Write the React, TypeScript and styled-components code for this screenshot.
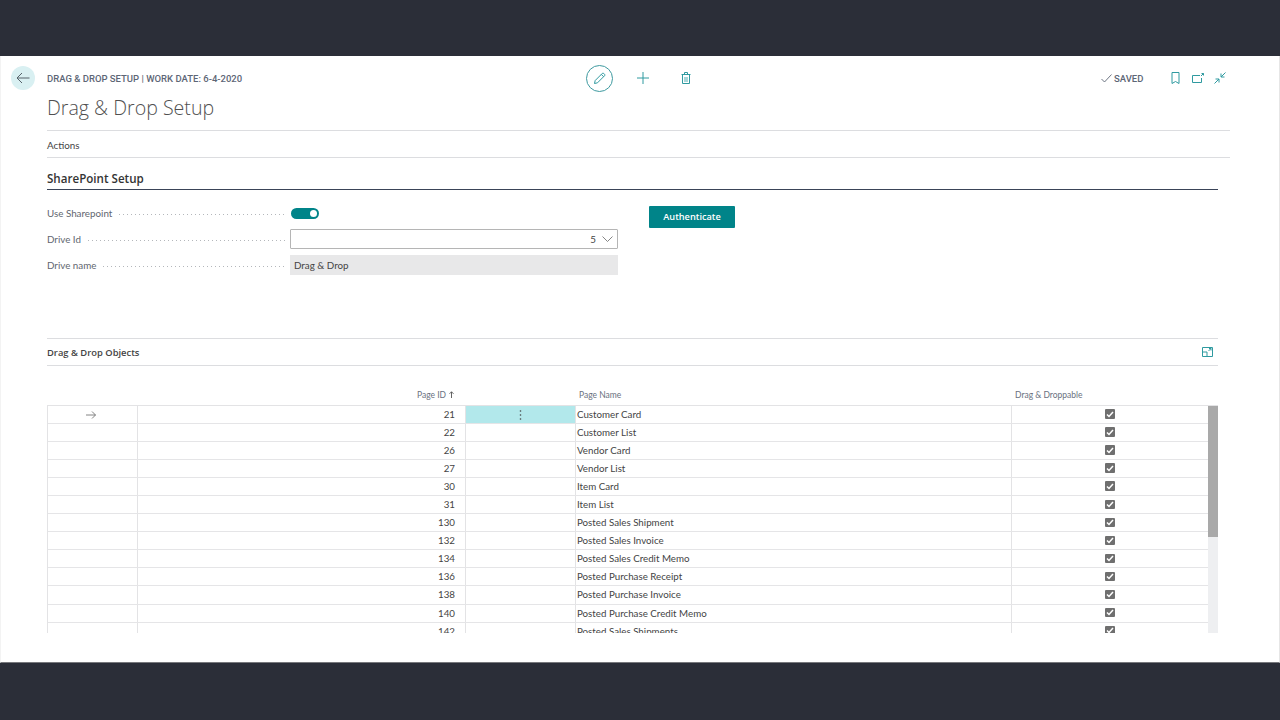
import React from "react";
import styled, { createGlobalStyle } from "styled-components";

const Global = createGlobalStyle`
  html, body { margin: 0; padding: 0; background: #2b2e38; }
  * { box-sizing: border-box; }
`;

const Frame = styled.div`
  width: 1280px; height: 720px; display: flex; flex-direction: column; overflow: hidden;
  font-family: "Open Sans", "Liberation Sans", sans-serif; color: #3f3f3f; background: #2b2e38;
`;
const DarkBar = styled.div`height: 56px; flex: none; background: #2b2e38;`;
const Sheet = styled.main`
  height: 607px; flex: none; background: #fff; border-bottom: 1px solid #77787c; border-right: 1px solid #e6e6e6; border-left: 1px solid #f3f3f3;
  padding: 0 61px 0 46px; display: flex; flex-direction: column;
`;
const Header = styled.header`display: flex; align-items: center; height: 44px; position: relative;`;
const BackCircle = styled.button`
  position: absolute; left: -36px; top: 10px; width: 24px; height: 24px; border-radius: 50%; border: 0; padding: 0;
  background: #d9f0f2; display: flex; align-items: center; justify-content: center;
`;
const Crumb = styled.div`
  font-family: Roboto, "Liberation Sans", sans-serif; font-size: 9.5px; font-weight: 500; color: #5d6676; width: 520px; flex: none;
`;
const CenterTools = styled.div`display: flex; align-items: center; width: 532px; padding-left: 19px; flex: none;`;
const EditCircle = styled.div`
  width: 27px; height: 27px; border-radius: 50%; border: 1px solid #3e9aa0; display: flex; align-items: center; justify-content: center; margin-right: 23px;
`;
const ToolSlot = styled.div`width: 14px; display: flex; justify-content: center; margin-right: 28.5px;`;
const RightTools = styled.div`display: flex; align-items: center;`;
const Saved = styled.div`
  display: flex; align-items: center; gap: 2px; font-family: Roboto, "Liberation Sans", sans-serif; font-size: 9.5px; font-weight: 500; color: #5d6676; width: 63px; margin-left: 2px;
`;
const IconSlot = styled.div`width: 22.5px; display: flex; justify-content: center;`;
const Title = styled.h1`
  margin: -5px 0 0; height: 35px; line-height: 26px; font-size: 19.6px; font-weight: 300; color: #505050;
`;
const ActionsBar = styled.nav`
  height: 28px; padding-top: 2px; border-top: 1px solid #dcdde0; border-bottom: 1px solid #dcdde0; font-family: Lato, "Open Sans", sans-serif; font-size: 9.8px; display: flex; align-items: center; color: #444; margin-bottom: 12px; margin-right: -12px;
`;
const SectionHead = styled.h2`
  margin: 0; height: 20px; line-height: 17px; font-size: 11.6px; font-weight: 600; color: #333; border-bottom: 1px solid #3a4458;
`;
const FormArea = styled.section`display: grid; grid-template-columns: 572px 1fr; height: 148px;`;
const Fields = styled.div`display: flex; flex-direction: column; padding-top: 10px; font-family: Lato, "Open Sans", sans-serif;`;
const FieldRow = styled.div`display: flex; align-items: center; height: 26px;`;
const Label = styled.label`
  width: 243px; flex: none; display: flex; align-items: center; gap: 7px; font-size: 9.8px; color: #5f6670; padding-right: 5px;
  &::after {
    content: ""; flex: 1; height: 1px; margin-top: 2px;
    background-image: linear-gradient(to right, #b4b7bb 1px, transparent 1px);
    background-size: 4px 1px;
  }
`;
const ToggleWrap = styled.div`width: 28px; height: 11px; background: #008489; border-radius: 6px; position: relative; margin-left: 1px;`;
const Knob = styled.span`position: absolute; right: 2px; top: 2px; width: 7px; height: 7px; border-radius: 50%; background: #fff;`;
const Select = styled.div`
  width: 328px; height: 20px; margin-top: -1px; border: 1px solid #b5b5b5; border-radius: 1px; display: flex; align-items: center; justify-content: flex-end; gap: 6px; padding-right: 4px; font-size: 9.8px; color: #444;
`;
const ReadOnly = styled.div`
  width: 328px; height: 20px; background: #e8e8e9; display: flex; align-items: center; padding-left: 4px; font-size: 9.8px; color: #444;
`;
const ButtonCol = styled.div`padding-top: 13px; padding-left: 30px;`;
const Primary = styled.button`
  width: 86px; height: 22px; border: 0; border-radius: 1px; background: #008489; color: #fff; font-family: inherit; font-size: 9.2px; font-weight: 600; padding: 0;
`;
const SubHead = styled.div`
  height: 28px; border-top: 1px solid #dcdde0; border-bottom: 1px solid #dcdde0; display: flex; align-items: center; justify-content: space-between; font-size: 9.4px; font-weight: 600; color: #444; padding-right: 5px;
`;
const Grid = styled.div`display: grid; grid-template-columns: 91px 328px 109px 436px 197px 10px;`;
const HeadRow = styled(Grid)`
  height: 39px; align-items: end; padding-bottom: 5px; font-family: Lato, "Open Sans", sans-serif; font-size: 8.5px; color: #6a7180;
`;
const HeadCell = styled.div<{ $align?: string }>`
  text-align: ${(p) => p.$align || "left"}; padding: 0 12px 0 4px;
  svg { margin-left: 3px; }
`;
const Viewport = styled.div`height: 228px; overflow: hidden; position: relative; border-top: 1px solid #e3e3e5; border-left: 1px solid #e3e3e5; font-family: Lato, "Open Sans", sans-serif;`;
const Row = styled(Grid)`
  height: 18.05px; grid-template-columns: 90px 328px 110px 436px 196px;
  border-bottom: 1px solid #e5e5e7; font-size: 9.75px; color: #444;
`;
const Cell = styled.div<{ $on?: boolean; $align?: string }>`
  border-right: 1px solid #e3e3e5; display: flex; align-items: center; white-space: nowrap;
  padding: ${(p) => (p.$align === "end" ? "0 10px 1px 0" : p.$align === "center" ? "0" : "0 0 1px 1px")};
  justify-content: ${(p) => p.$align === "end" ? "flex-end" : p.$align === "center" ? "center" : "flex-start"};
  background: ${(p) => (p.$on ? "#b2e8eb" : "transparent")};
`;
const LastCell = styled(Cell)`border-right: 0;`;
const RowArrow = styled.svg`margin-right: 3px;`;
const Box = styled.span`
  width: 9.5px; height: 9.5px; margin-bottom: 1px; background: #6f6f6f; border-radius: 1px; display: flex; align-items: center; justify-content: center;
`;
const Track = styled.div`position: absolute; right: 0; top: 0; bottom: 0; width: 10px; background: #eeeff1;`;
const Thumb = styled.div`height: 131px; background: #a9a9a9;`;

const rows: [number, string][] = [
  [21, "Customer Card"], [22, "Customer List"], [26, "Vendor Card"], [27, "Vendor List"],
  [30, "Item Card"], [31, "Item List"], [130, "Posted Sales Shipment"], [132, "Posted Sales Invoice"],
  [134, "Posted Sales Credit Memo"], [136, "Posted Purchase Receipt"], [138, "Posted Purchase Invoice"],
  [140, "Posted Purchase Credit Memo"], [142, "Posted Sales Shipments"],
];

const teal = "#2f9aa0";

const App = () => (
  <Frame>
    <Global />
    <DarkBar />
    <Sheet>
      <Header>
        <BackCircle aria-label="Back">
          <svg width="14" height="12" viewBox="0 0 14 12" fill="none" stroke="#56626a" strokeWidth="1"><path d="M13.5 6H1M6 1 1 6l5 5" /></svg>
        </BackCircle>
        <Crumb>DRAG &amp; DROP SETUP | WORK DATE: 6-4-2020</Crumb>
        <CenterTools>
          <EditCircle>
            <svg width="13" height="13" viewBox="0 0 13 13" fill="none" stroke={teal} strokeWidth="1"><path d="M1.5 11.5l.7-3L9.3 1.4a1 1 0 0 1 1.4 0l.9.9a1 1 0 0 1 0 1.4L4.5 10.8zM8.3 2.4l2.3 2.3" /></svg>
          </EditCircle>
          <ToolSlot>
            <svg width="12" height="12" viewBox="0 0 12 12" fill="none" stroke={teal} strokeWidth="1"><path d="M6 0v12M0 6h12" /></svg>
          </ToolSlot>
          <ToolSlot>
            <svg width="10" height="12" viewBox="0 0 10 12" fill="none" stroke={teal} strokeWidth="1"><path d="M.5 2.5h9M3.5 2.5v-2h3v2M1.5 2.500v9h7v-9" /><path d="M3 5h4v5H3z" fill="#a8d6d9" stroke="none" /></svg>
          </ToolSlot>
        </CenterTools>
        <RightTools>
          <Saved>
            <svg width="11" height="9" viewBox="0 0 11 9" fill="none" stroke="#5d6676" strokeWidth="0.9"><path d="M.5 5l3 3 7-7.500" /></svg>
            SAVED
          </Saved>
          <IconSlot>
            <svg width="9" height="12" viewBox="0 0 9 12" fill="none" stroke={teal} strokeWidth="1"><path d="M1 .5h7v11L4.500 9.500 1 11.500z" /></svg>
          </IconSlot>
          <IconSlot>
            <svg width="12" height="10" viewBox="0 0 12 10" fill="none" stroke={teal} strokeWidth="1"><path d="M8 2.500H.5v7h9V5M9 3l2.500-2.500M9.500.5h2v2" /></svg>
          </IconSlot>
          <IconSlot>
            <svg width="12" height="12" viewBox="0 0 12 12" fill="none" stroke={teal} strokeWidth="1"><path d="M11.500.5 7 5M7 1.500V5h3.500M.5 11.500 5 7M1.500 7H5v3.500" /></svg>
          </IconSlot>
        </RightTools>
      </Header>
      <Title>Drag &amp; Drop Setup</Title>
      <ActionsBar>Actions</ActionsBar>
      <SectionHead>SharePoint Setup</SectionHead>
      <FormArea>
        <Fields>
          <FieldRow>
            <Label>Use Sharepoint</Label>
            <ToggleWrap><Knob /></ToggleWrap>
          </FieldRow>
          <FieldRow>
            <Label>Drive Id</Label>
            <Select>
              5
              <svg width="11" height="6" viewBox="0 0 11 6" fill="none" stroke="#777" strokeWidth="0.9"><path d="M.5.5l5 5 5-5" /></svg>
            </Select>
          </FieldRow>
          <FieldRow>
            <Label>Drive name</Label>
            <ReadOnly>Drag &amp; Drop</ReadOnly>
          </FieldRow>
        </Fields>
        <ButtonCol><Primary>Authenticate</Primary></ButtonCol>
      </FormArea>
      <SubHead>
        Drag &amp; Drop Objects
        <svg width="11" height="10" viewBox="0 0 11 10" fill="none" stroke={teal} strokeWidth="1"><path d="M.5.5h10v9H.5zM.5 5h4.500v4.500M6.500 4l2.500-2.500M7 1.500h2V3.500" /></svg>
      </SubHead>
      <HeadRow>
        <HeadCell />
        <HeadCell $align="right">
          Page ID
          <svg width="5" height="7" viewBox="0 0 5 7" fill="none" stroke="#555" strokeWidth="0.9"><path d="M2.500 7V.8M.5 2.800l2-2 2 2" /></svg>
        </HeadCell>
        <HeadCell />
        <HeadCell>Page Name</HeadCell>
        <HeadCell>Drag &amp; Droppable</HeadCell>
      </HeadRow>
      <Viewport>
        {rows.map(([id, name], i) => (
          <Row key={id}>
            <Cell $align="center">
              {i === 0 && (
                <RowArrow width="10" height="8" viewBox="0 0 10 8" fill="none" stroke="#666" strokeWidth="0.8"><path d="M0 4h9.500M6 .5 9.500 4 6 7.500" /></RowArrow>
              )}
            </Cell>
            <Cell $align="end">{id}</Cell>
            <Cell $on={i === 0} $align="center">
              {i === 0 && (
                <svg width="3" height="10" viewBox="0 0 3 10" fill="#444"><circle cx="1.500" cy="1" r="0.800" /><circle cx="1.500" cy="5" r="0.800" /><circle cx="1.500" cy="9" r="0.800" /></svg>
              )}
            </Cell>
            <Cell>{name}</Cell>
            <LastCell $align="center">
              <Box>
                <svg width="8" height="7" viewBox="0 0 8 7" fill="none" stroke="#fff" strokeWidth="1.500"><path d="M1 3.500 3 5.500 7 1" /></svg>
              </Box>
            </LastCell>
          </Row>
        ))}
        <Track><Thumb /></Track>
      </Viewport>
    </Sheet>
    <DarkBar />
  </Frame>
);

export default App;
